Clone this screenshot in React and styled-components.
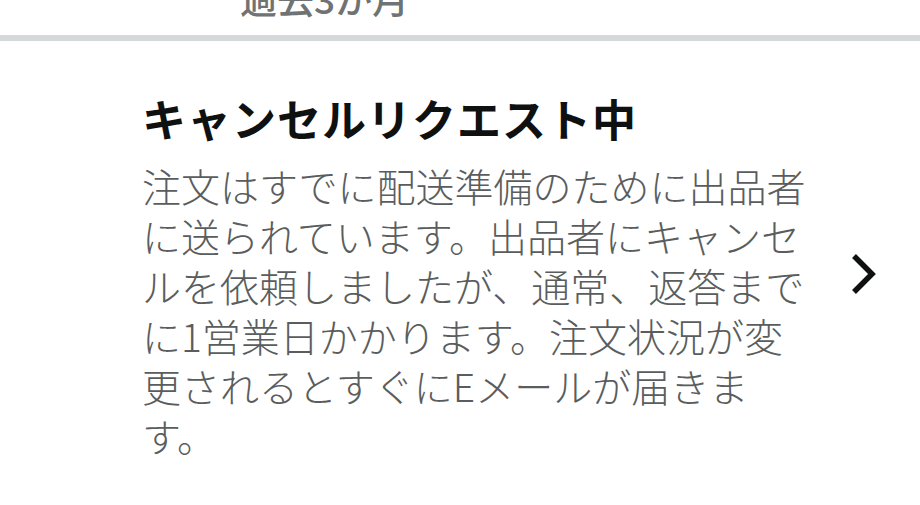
import React from "react";
import styled, { createGlobalStyle } from "styled-components";

const Global = createGlobalStyle`
  html, body { margin: 0; padding: 0; background: #ffffff; }
  body { font-family: "Noto Sans CJK JP", "Noto Sans", sans-serif; overflow: hidden; }
`;

const Page = styled.div`
  width: 920px;
  height: 505px;
  overflow: hidden;
  background: #fff;
`;

const TopLabel = styled.div`
  padding-left: 240px;
  margin-top: -27px;
  height: 62px;
  font-size: 37px;
  line-height: 50px;
  font-weight: 500;
  color: #6f7373;
`;

const Divider = styled.div`
  height: 6px;
  background: #d5d9d9;
`;

const Row = styled.div`
  display: flex;
  align-items: center;
  padding: 47px 0 0 142px;
`;

const Content = styled.div`
  width: 665px;
`;

const Title = styled.div`
  font-size: 44px;
  font-weight: 700;
  color: #0f1111;
  line-height: 60px;
  letter-spacing: 1px;
`;

const Body = styled.div`
  margin-top: 12px;
  font-size: 39px;
  line-height: 50px;
  color: #5a5d5d;
  font-weight: 300;
`;

const Chevron = styled.div`
  margin-left: 42px;
  display: flex;
  align-items: center;
`;

export default function App() {
  return (
    <Page>
      <Global />
      <TopLabel>過去3か月</TopLabel>
      <Divider />
      <Row>
        <Content>
          <Title>キャンセルリクエスト中</Title>
          <Body>
            注文はすでに配送準備のために出品者に送られています。出品者にキャンセルを依頼しましたが、通常、返答までに1営業日かかります。注文状況が変更されるとすぐにEメールが届きます。
          </Body>
        </Content>
        <Chevron>
          <svg width="30" height="44" viewBox="0 0 30 44">
            <path d="M5 4 L23 22 L5 40" fill="none" stroke="#0f1111" strokeWidth="5.5" strokeLinecap="butt" strokeLinejoin="miter" />
          </svg>
        </Chevron>
      </Row>
    </Page>
  );
}
